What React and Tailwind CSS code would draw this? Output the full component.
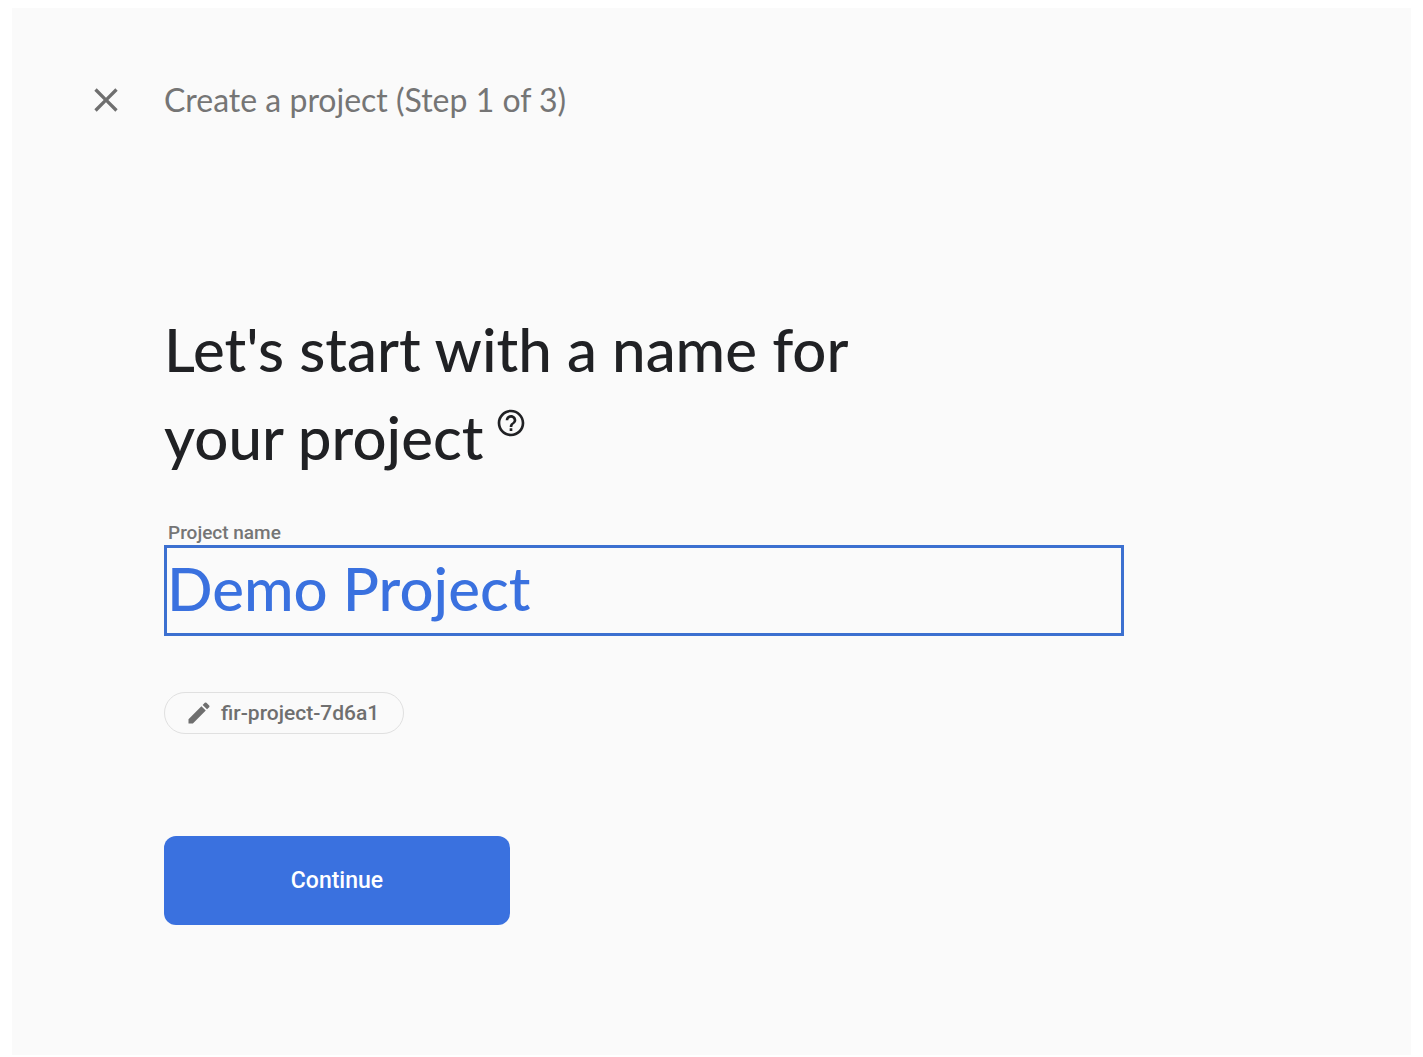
/**
 * CreateProject
 *
 * First step of the project wizard: name the project and continue.
 */

import { useState } from 'react';
import { MdClose, MdEdit, MdHelpOutline } from 'react-icons/md';

const WizardHeader = ({ step, total }) => (
  <header className="flex items-center gap-[38px]">
    <button type="button" aria-label="Close" className="text-[#6f6f6f]">
      <MdClose className="size-10" />
    </button>
    <p className="font-['Lato',sans-serif] text-[32px] leading-10 text-[#757575]">
      Create a project (Step {step} of {total})
    </p>
  </header>
);

const ProjectIdChip = ({ id }) => (
  <button
    type="button"
    className="mt-14 flex h-[42px] items-center gap-2 self-start rounded-full border border-[#e0e0e0] pr-6 pl-5 text-[21px] leading-6 font-medium text-[#6f6f6f]"
  >
    <MdEdit className="size-7" />
    {id}
  </button>
);

const App = () => {
  const [name, setName] = useState('Demo Project');

  return (
    <div className="flex min-h-screen bg-white px-3 pt-2 pb-0.5 font-['Roboto',sans-serif]">
      <main className="flex-1 bg-[#fafafa] px-[74px] pt-[72px] pb-20">
        <WizardHeader step={1} total={3} />

        <form
          className="mt-[185px] ml-[78px] flex max-w-[960px] flex-col"
          onSubmit={(e) => e.preventDefault()}
        >
          <h1 className="max-w-[740px] font-['Lato',sans-serif] text-[60px] leading-[88px] font-medium text-[#202124]">
            Let's start with a name for your project
            <button type="button" aria-label="Help" className="ml-3 align-super">
              <MdHelpOutline className="size-8" />
            </button>
          </h1>

          <label
            htmlFor="project-name"
            className="mt-10 px-1 text-[19px] leading-6 font-medium text-[#757575]"
          >
            Project name
          </label>
          <input
            id="project-name"
            type="text"
            value={name}
            onChange={(e) => setName(e.target.value)}
            className="h-[91px] w-full border-3 border-[#3c70d0] pb-1.5 font-['Lato',sans-serif] text-[60px] font-medium text-[#3a71df] outline-none"
          />

          <ProjectIdChip id="fir-project-7d6a1" />

          <button
            type="submit"
            className="mt-[102px] h-[89px] w-[346px] rounded-xl bg-[#3a71df] text-[23px] leading-7 font-medium text-white"
          >
            Continue
          </button>
        </form>
      </main>
    </div>
  );
};

export default App;
